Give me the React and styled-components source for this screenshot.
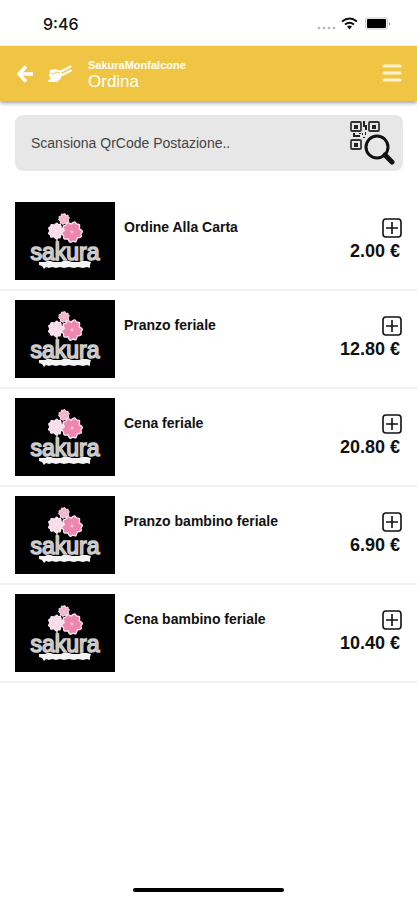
import React, { useState } from "react";
import styled, { createGlobalStyle } from "styled-components";

const GlobalStyle = createGlobalStyle`
  * {
    box-sizing: border-box;
  }
  body {
    margin: 0;
    background: #ffffff;
    color: #111111;
    font-family: "Liberation Sans", Arial, sans-serif;
  }
  button {
    display: flex;
    padding: 0;
    border: none;
    background: none;
    color: inherit;
    cursor: pointer;
  }
`;

const Screen = styled.div`
  min-height: 100vh;
  display: flex;
  flex-direction: column;
`;

const StatusBar = styled.div`
  height: 46px;
  display: flex;
  align-items: center;
  justify-content: space-between;
  padding: 2px 26px 0 43px;
`;

const Clock = styled.span`
  font-family: Inter, sans-serif;
  font-size: 16px;
  font-weight: 500;
  line-height: 20px;
`;

const StatusIcons = styled.div`
  display: flex;
  align-items: center;
`;

const Header = styled.header`
  height: 55px;
  display: flex;
  align-items: center;
  padding: 0 14px 0 16px;
  background: #f0c544;
  color: #ffffff;
  box-shadow: 0 2px 4px rgba(60, 60, 90, 0.5);
`;

const Titles = styled.div`
  flex: 1;
  margin-left: 14px;
  padding-top: 2px;
`;

const Restaurant = styled.div`
  font-size: 11px;
  font-weight: 700;
  line-height: 14px;
`;

const PageTitle = styled.h1`
  margin: 0;
  font-size: 17px;
  font-weight: 400;
  line-height: 20px;
`;

const Chopsticks = styled.svg`
  margin-left: 14px;
`;

const Search = styled.form`
  height: 56px;
  display: flex;
  align-items: center;
  margin: 14px 14px 22px 15px;
  padding: 0 8px 0 16px;
  border-radius: 8px;
  background: #e7e7e7;
`;

const SearchInput = styled.input`
  flex: 1;
  min-width: 0;
  padding: 0;
  border: none;
  outline: none;
  background: transparent;
  font-family: inherit;
  font-size: 14px;
  line-height: 20px;
  color: #444444;
  &::placeholder {
    color: #444444;
    opacity: 1;
  }
`;

const List = styled.ul`
  margin: 0;
  padding: 0;
  list-style: none;
`;

const Item = styled.li`
  height: 98px;
  display: flex;
  padding: 9px 15px;
  border-bottom: 2px solid #f1f1f1;
`;

const Thumb = styled.svg`
  flex: none;
  width: 100px;
  height: 78px;
  background: #000000;
`;

const Name = styled.h2`
  flex: 1;
  margin: 16px 0 0 9px;
  font-size: 14px;
  font-weight: 700;
  line-height: 18px;
`;

const Side = styled.div`
  display: flex;
  flex-direction: column;
  align-items: flex-end;
  padding-top: 16px;
`;

const Price = styled.span`
  margin-top: 3px;
  padding-right: 2px;
  font-size: 18px;
  font-weight: 700;
  line-height: 20px;
`;

const HomeArea = styled.footer`
  margin-top: auto;
  display: flex;
  justify-content: center;
  padding-bottom: 8px;
`;

const HomeBar = styled.div`
  width: 36%;
  height: 4px;
  border-radius: 2px;
  background: #000000;
`;

const items = [
  { name: "Ordine Alla Carta", price: "2.00 €" },
  { name: "Pranzo feriale", price: "12.80 €" },
  { name: "Cena feriale", price: "20.80 €" },
  { name: "Pranzo bambino feriale", price: "6.90 €" },
  { name: "Cena bambino feriale", price: "10.40 €" },
];

const petal = "M0 0L-4 -5Q-4 -8 -2.500 -9.500L0 -8.500L2.500 -9.500Q4 -8 4 -5Z";

function Flower({ x, y, scale, turn, fill }) {
  const petals = [0, 72, 144, 216, 288];
  return (
    <g transform={`translate(${x} ${y}) scale(${scale}) rotate(${turn})`}>
      {petals.map((a) => (
        <path key={a} d={petal} transform={`rotate(${a})`} fill="#fff" stroke="#fdeef4" strokeWidth="3" strokeLinejoin="round" />
      ))}
      {petals.map((a) => (
        <path key={a} d={petal} transform={`rotate(${a})`} fill={fill} stroke={fill} strokeWidth="0.5" />
      ))}
      <circle r="1.500" fill="#fff" fillOpacity="0.5" />
    </g>
  );
}

function SakuraLogo() {
  return (
    <Thumb viewBox="0 0 100 78" aria-hidden="true">
      <path d="M42 34v16" stroke="#d8d8d8" strokeWidth="1.5" />
      <Flower x={49} y={17} scale={0.52} turn={-10} fill="#f3b3cd" />
      <Flower x={41} y={29} scale={0.75} turn={20} fill="#fbdce8" />
      <Flower x={57} y={30} scale={0.98} turn={30} fill="#ee86b2" />
      <text
        x="50"
        y="58"
        textAnchor="middle"
        fontSize="23"
        fill="#a8a8a8"
        stroke="#cfcfcf"
        strokeWidth="1.5"
        fontFamily="Liberation Sans, Arial, sans-serif"
      >
        sakura
      </text>
      <path
        d="M24 60h6l2-1h4l2 1h8l2-1h6l3 1h7l2-1h6l4 1-1 3v3l-3-1-4 1-5-1-4 1-5-1-5 1-4-1-4 1-4-1-3 1-3-1-2 2-2-3-3-1z"
        fill="#f4f4f4"
      />
    </Thumb>
  );
}

function QrSearchIcon() {
  return (
    <svg width="46" height="46" viewBox="0 0 46 46" fill="none" stroke="#111">
      <g strokeWidth="1.800" stroke="#333">
        <rect x="2" y="2" width="10" height="9" rx="1" />
        <rect x="20" y="2" width="10" height="9" rx="1" />
        <rect x="2" y="20" width="10" height="9" rx="1" />
      </g>
      <g fill="#222" stroke="none">
        <rect x="5" y="5" width="4" height="4" />
        <rect x="23" y="5" width="4" height="4" />
        <rect x="5" y="23" width="4" height="4" />
        <path d="M14 1h2v4h2v5h-2V7h-2zM4 13h2v2h5v2H4zM10 13h2v1h-2zM13 13h1v2h-1zM16 12h1v3h-1zM14 17h2v1h-2z" />
      </g>
      <circle cx="28" cy="27" r="11" strokeWidth="3" />
      <path d="M36 35l7 7" strokeWidth="5" strokeLinecap="round" />
    </svg>
  );
}

function PlusIcon() {
  return (
    <svg width="20" height="20" viewBox="0 0 20 20" fill="none" stroke="#111">
      <rect x="1" y="1" width="18" height="18" rx="3" strokeWidth="1.600" />
      <path d="M10 4v12M4 10h12" strokeWidth="1.600" />
    </svg>
  );
}

export default function App() {
  const [code, setCode] = useState("");

  return (
    <Screen>
      <GlobalStyle />
      <StatusBar>
        <Clock>9:46</Clock>
        <StatusIcons>
          <svg width="75" height="18" viewBox="0 0 75 18" aria-hidden="true">
            <g fill="#b5b5b5">
              <circle cx="3" cy="13" r="1.300" />
              <circle cx="8" cy="13" r="1.300" />
              <circle cx="13" cy="13" r="1.300" />
              <circle cx="18" cy="13" r="1.300" />
            </g>
            <g fill="none" stroke="#111" strokeWidth="2">
              <path d="M26 6.500q7.500-6 15 0" />
              <path d="M29 9.500q4.500-3.500 9 0" />
            </g>
            <path d="M33.500 14.500l-2.500-3q2.500-2 5 0z" fill="#111" />
            <rect x="49.500" y="3" width="22" height="11" rx="2" fill="#fff" stroke="#c4c4c4" />
            <rect x="51" y="4" width="19" height="9" rx="1" fill="#000" />
            <path d="M73 7v4q2-2 0-4" fill="#888" />
          </svg>
        </StatusIcons>
      </StatusBar>

      <Header>
        <button type="button" aria-label="Indietro">
          <svg width="18" height="18" viewBox="0 0 18 18" fill="none" stroke="#fff" strokeWidth="3.500">
            <path d="M10 1.500L3 9l7 7.500M3.500 9H17" />
          </svg>
        </button>
        <Chopsticks width="26" height="22" viewBox="0 0 26 22" aria-hidden="true">
          <path d="M13 8.500L22.500 3.500M14 12l9-4.500" stroke="#fff" strokeWidth="2" strokeLinecap="round" />
          <path d="M2 7l6-1 5 2 1 3-1 4-4 4H1l-1-2 3-1-2-3z" fill="#fff" />
          <path d="M3 10q2 2 4 0t5 0" stroke="#f0c544" fill="none" />
        </Chopsticks>
        <Titles>
          <Restaurant>SakuraMonfalcone</Restaurant>
          <PageTitle>Ordina</PageTitle>
        </Titles>
        <button type="button" aria-label="Menu">
          <svg width="22" height="22" viewBox="0 0 22 22" stroke="#fff3cf" strokeWidth="3" strokeLinecap="round">
            <path d="M3 3h16M3 10h16M3 17h16" />
          </svg>
        </button>
      </Header>

      <Search onSubmit={(e) => e.preventDefault()}>
        <SearchInput
          type="text"
          aria-label="Scansiona QrCode Postazione"
          placeholder="Scansiona QrCode Postazione.."
          value={code}
          onChange={(e) => setCode(e.target.value)}
        />
        <button type="submit" aria-label="Scansiona">
          <QrSearchIcon />
        </button>
      </Search>

      <List>
        {items.map((item) => (
          <Item key={item.name}>
            <SakuraLogo />
            <Name>{item.name}</Name>
            <Side>
              <button type="button" aria-label={`Aggiungi ${item.name}`}>
                <PlusIcon />
              </button>
              <Price>{item.price}</Price>
            </Side>
          </Item>
        ))}
      </List>

      <HomeArea>
        <HomeBar />
      </HomeArea>
    </Screen>
  );
}
